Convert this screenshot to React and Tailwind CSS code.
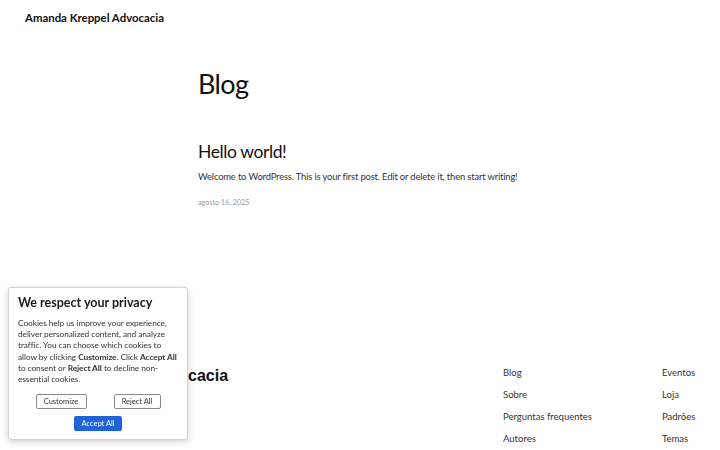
import React from 'react'

const footerCols = [
  ['Blog', 'Sobre', 'Perguntas frequentes', 'Autores'],
  ['Eventos', 'Loja', 'Padrões', 'Temas'],
]

function CookieBanner() {
  return (
    <div className="fixed left-[8px] top-[287px] w-[180px] h-[153px] bg-white border border-[#d4d4d4] rounded-[3px] shadow-[0_2px_6px_rgba(0,0,0,0.18)] px-[9px] pt-[7px] font-['Lato',sans-serif]">
      <h2 className="text-[12.5px] font-bold text-[#1a1a1a] leading-[16px]">We respect your privacy</h2>
      <p className="mt-[7px] text-[8.3px] leading-[11.2px] text-[#333] tracking-[-0.05px]">
        Cookies help us improve your experience, deliver personalized content, and analyze traffic. You can choose which cookies to allow by clicking <b className="font-bold">Customize</b>. Click <b className="font-bold">Accept All</b> to consent or <b className="font-bold">Reject All</b> to decline non-essential cookies.
      </p>
      <div className="mt-[9px] flex justify-center gap-[27px]">
        <button className="w-[51px] h-[15px] border border-[#8a8a8a] rounded-[2px] text-[7.5px] text-[#333]">Customize</button>
        <button className="w-[47px] h-[15px] border border-[#8a8a8a] rounded-[2px] text-[7.5px] text-[#333]">Reject All</button>
      </div>
      <div className="mt-[7px] flex justify-center">
        <button className="w-[48px] h-[15px] bg-[#1e63d8] rounded-[2px] text-[7.5px] text-white">Accept All</button>
      </div>
    </div>
  )
}

export default function App() {
  return (
    <div className="relative w-[720px] h-[450px] overflow-hidden bg-white text-[#111] font-['Lato',sans-serif]">
      <header className="h-[34px] flex items-center px-[25px] pt-[2px]">
        <span className="text-[11.4px] font-bold">Amanda Kreppel Advocacia</span>
      </header>

      <main className="pl-[198px] pt-[33px]">
        <h1 className="text-[27px] leading-[34px] font-normal tracking-[-0.6px]">Blog</h1>
        <article className="mt-[40px]">
          <h2 className="text-[17.5px] leading-[22px] font-normal tracking-[-0.4px]">Hello world!</h2>
          <p className="mt-[7px] text-[9.4px] leading-[13px] text-[#333] tracking-[-0.15px]">
            Welcome to WordPress. This is your first post. Edit or delete it, then start writing!
          </p>
          <p className="mt-[15px] text-[7.2px] leading-[10px] text-[#999]">agosto 16, 2025</p>
        </article>
      </main>

      <footer className="mt-[155px] flex pl-[17px]">
        <div className="w-[486px]">
          <span className="text-[16px] font-bold leading-[22px] font-['Liberation_Sans',sans-serif]">Amanda Kreppel Advocacia</span>
        </div>
        <div className="flex mt-[3px]">
          {footerCols.map((col, i) => (
            <ul key={i} className={i === 0 ? 'w-[159px] flex flex-col gap-[8px]' : 'flex flex-col gap-[8px]'}>
              {col.map((item) => (
                <li key={item} className="text-[9.5px] leading-[14px] text-[#333]">{item}</li>
              ))}
            </ul>
          ))}
        </div>
      </footer>

      <CookieBanner />
    </div>
  )
}
